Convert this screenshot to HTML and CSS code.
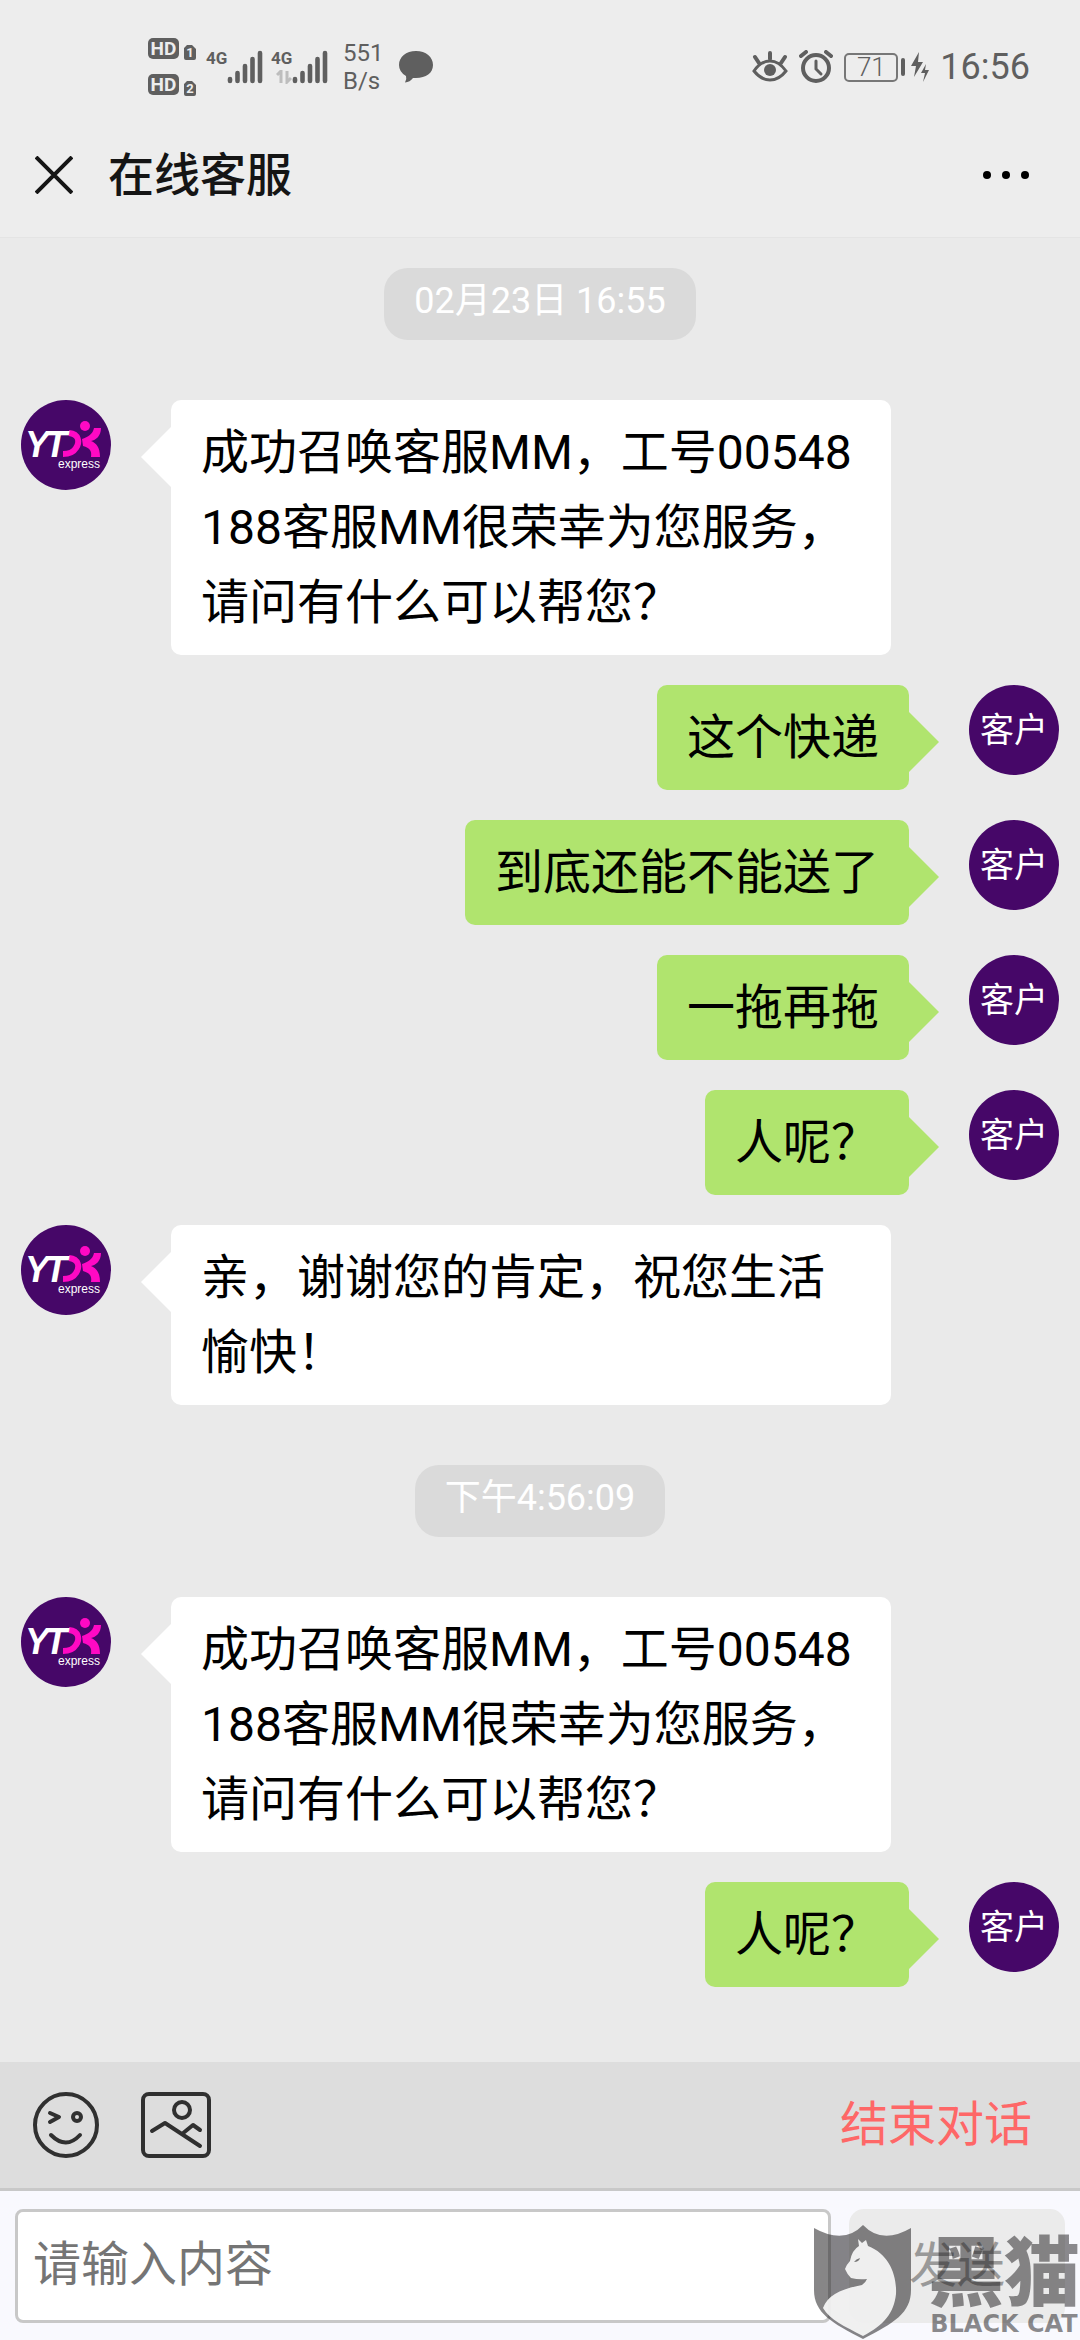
FILE: index.html
```html
<!DOCTYPE html>
<html lang="zh-CN">
<head>
<meta charset="utf-8">
<meta name="viewport" content="width=device-width, initial-scale=1">
<title>在线客服</title>
<link rel="stylesheet" href="styles.css">
</head>
<body>
<svg class="defs" width="0" height="0" aria-hidden="true">
  <symbol id="yto" viewBox="0 0 90 90">
    <circle cx="45" cy="45" r="45" fill="#460768"/>
    <path d="M48 33C58 34 59 42 55 48C52 53 48 54 42 54" fill="none" stroke="#ff09c4" stroke-width="6"/>
    <path d="M80 28C80 36 75 40 70 41C75 43 79 47 79 57L70 57C71 51 69 48 62 46L61 39C67 37 72 34 73 28Z" fill="#ff09c4"/>
    <circle cx="64" cy="26" r="5" fill="#ff09c4"/>
  </symbol>
  <symbol id="bars" viewBox="0 0 36 34">
    <path d="M3 29v2M10.500 23v8M18 16v15M25.500 9v22M33 3v28" fill="none" stroke="#5f5f5f" stroke-width="4.600" stroke-linecap="round"/>
  </symbol>
</svg>

<div class="status-bar">
  <div class="status-left">
    <svg width="50" height="58" viewBox="0 0 50 58" role="img" aria-label="HD 1, HD 2">
      <g fill="#5f5f5f">
        <rect x="0" y="0" width="31" height="21" rx="5"/>
        <rect x="0" y="36" width="31" height="21" rx="5"/>
        <path d="M39 7h5l4 4v9q0 2-2 2h-8q-2 0-2-2V10zM39 43h5l4 4v9q0 2-2 2h-8q-2 0-2-2V46z"/>
      </g>
      <g class="hd-text">
        <text x="15.500" y="17">HD</text>
        <text x="15.500" y="53">HD</text>
      </g>
      <g class="sim-text">
        <text x="42" y="19">1</text>
        <text x="42" y="55">2</text>
      </g>
    </svg>
    <div class="signal">
      <span class="network">4G</span>
      <svg width="36" height="34"><use href="#bars"/></svg>
    </div>
    <div class="signal">
      <div class="network-column">
        <span class="network">4G</span>
        <svg width="16" height="14" viewBox="0 0 16 14"><path d="M1 5l4-4v12M15 8l-4 4V1" fill="none" stroke="#bdbdbd" stroke-width="3"/></svg>
      </div>
      <svg width="36" height="34"><use href="#bars"/></svg>
    </div>
    <div class="speed">551<br>B/s</div>
    <svg width="34" height="32" viewBox="0 0 34 32"><path d="M17 0C27 0 34 6 34 14S27 27 17 27L14 27Q11 31 6 31.500Q8 28 7 25Q0 21 0 14C0 6 7 0 17 0Z" fill="#5f5f5f"/></svg>
  </div>
  <div class="status-right">
    <svg width="36" height="32" viewBox="0 0 36 32" fill="none" stroke="#5f5f5f" stroke-width="4" stroke-linecap="round">
      <path d="M2 20Q9 10 18 10T34 20Q27 29 18 29T2 20Z" stroke-width="3"/>
      <circle cx="18" cy="19" r="6" fill="#5f5f5f" stroke="none"/>
      <path d="M18 2v6M3 6l4 6M33 6l-4 6"/>
    </svg>
    <svg width="34" height="34" viewBox="0 0 34 34" fill="none" stroke="#5f5f5f" stroke-width="4" stroke-linecap="round">
      <circle cx="17" cy="18" r="13"/>
      <path d="M2 6l5-4M32 6l-5-4" />
      <path d="M17 11v8l5 5" stroke-width="3"/>
    </svg>
    <div class="battery"><span class="battery-level">71</span><span class="battery-tip"></span>
      <svg width="18" height="30" viewBox="0 0 18 30"><path d="M8 0L0 14h5l-2 11L12 10H7zM15 12l-5 9h4l-2 9l6-12h-4z" fill="#5f5f5f"/></svg>
    </div>
    <time class="clock">16:56</time>
  </div>
</div>

<header class="title-bar">
  <button class="icon-button" aria-label="关闭"><svg width="38" height="38" viewBox="0 0 38 38"><path d="M1 1L37 37M37 1L1 37" stroke="#151515" stroke-width="4"/></svg></button>
  <h1 class="title">在线客服</h1>
  <button class="icon-button" aria-label="更多"><svg width="48" height="10" viewBox="0 0 48 10"><circle cx="5" cy="5" r="4"/><circle cx="24" cy="5" r="4"/><circle cx="43" cy="5" r="4"/></svg></button>
</header>

<main class="chat">
  <time class="stamp">02月23日 16:55</time>
  <div class="message">
    <svg class="avatar" role="img" aria-label="YTO express"><use href="#yto"/><text class="logo-main" y="57"><tspan x="4">Y</tspan><tspan x="24">T</tspan></text><text class="logo-sub" x="37" y="68">express</text></svg>
    <p class="bubble">成功召唤客服MM，工号00548188客服MM很荣幸为您服务，请问有什么可以帮您？</p>
  </div>
  <div class="message mine"><p class="bubble">这个快递</p><span class="avatar customer">客户</span></div>
  <div class="message mine"><p class="bubble">到底还能不能送了</p><span class="avatar customer">客户</span></div>
  <div class="message mine"><p class="bubble">一拖再拖</p><span class="avatar customer">客户</span></div>
  <div class="message mine"><p class="bubble">人呢？</p><span class="avatar customer">客户</span></div>
  <div class="message">
    <svg class="avatar" role="img" aria-label="YTO express"><use href="#yto"/><text class="logo-main" y="57"><tspan x="4">Y</tspan><tspan x="24">T</tspan></text><text class="logo-sub" x="37" y="68">express</text></svg>
    <p class="bubble">亲，谢谢您的肯定，祝您生活愉快！</p>
  </div>
  <time class="stamp">下午4:56:09</time>
  <div class="message">
    <svg class="avatar" role="img" aria-label="YTO express"><use href="#yto"/><text class="logo-main" y="57"><tspan x="4">Y</tspan><tspan x="24">T</tspan></text><text class="logo-sub" x="37" y="68">express</text></svg>
    <p class="bubble">成功召唤客服MM，工号00548188客服MM很荣幸为您服务，请问有什么可以帮您？</p>
  </div>
  <div class="message mine"><p class="bubble">人呢？</p><span class="avatar customer">客户</span></div>
</main>

<footer>
  <div class="toolbar">
    <button class="icon-button" aria-label="表情">
      <svg width="66" height="66" viewBox="0 0 66 66" fill="none" stroke="#303030" stroke-width="4" stroke-linecap="round" stroke-linejoin="round">
        <circle cx="33" cy="33" r="31"/>
        <path d="M17 21l9 4l-9 5M18 43q15 15 29 0"/>
        <circle cx="44" cy="25" r="4"/>
      </svg>
    </button>
    <button class="icon-button" aria-label="图片">
      <svg width="70" height="66" viewBox="0 0 70 66" fill="none" stroke="#303030" stroke-width="4" stroke-linecap="round" stroke-linejoin="round">
        <rect x="2" y="2" width="66" height="62" rx="6"/>
        <circle cx="41" cy="18" r="8"/>
        <path d="M11 39l13-8l35 23M41 42l11-9l7 5"/>
      </svg>
    </button>
    <button class="end-chat">结束对话</button>
  </div>
  <form class="composer">
    <input class="message-input" type="text" placeholder="请输入内容" aria-label="请输入内容">
    <button class="send" type="button">发送</button>
    <div class="watermark">
      <svg width="98" height="115" viewBox="0 0 98 115">
        <path d="M0 3Q30 20 49 0Q68 20 97 3V65C97 88 80 98 49 114C18 98 0 88 0 65Z" fill="#1c1a1c" fill-opacity=".53"/>
        <path d="M44 14L48 18L52 15L54 21C75 29 83 50 82 69C80 88 70 100 49 111C30 101 16 95 9 83C14 70 27 64 48 60Q52 57 53 54Q45 55 37 53Q33 49 31 44Q33 39 36 36Q38 25 45 21Z" fill="#fff" fill-opacity=".88"/>
        <path d="M40 37q2-3 6-4q-1 4-6 4" fill="#777"/>
      </svg>
      <div class="watermark-text">
        <span class="watermark-name">黑猫</span>
        <span class="watermark-latin">BLACK CAT</span>
      </div>
    </div>
  </form>
</footer>
</body>
</html>
```

FILE: styles.css
```css
* {
  box-sizing: border-box;
}

body {
  margin: 0;
  min-height: 100vh;
  display: flex;
  flex-direction: column;
  background: #eaeaea;
  color: #000;
  font-family: Roboto, "Noto Sans CJK SC", sans-serif;
  font-size: 48px;
}

svg {
  display: block;
  flex: none;
}

button {
  border: 0;
  padding: 0;
  background: none;
  color: inherit;
  font: inherit;
}

.defs {
  position: absolute;
}

/* Status bar */
.status-bar {
  display: flex;
  align-items: center;
  justify-content: space-between;
  height: 134px;
  padding: 0 50px 0 148px;
  background: #ededed;
  color: #5f5f5f;
}

.status-left {
  display: flex;
  align-items: center;
  gap: 10px;
}

.status-right {
  display: flex;
  align-items: center;
  gap: 11px;
}

.hd-text,
.sim-text,
.network {
  font-family: "Liberation Sans Narrow", Roboto, sans-serif;
  font-weight: 700;
}

.hd-text {
  fill: #ededed;
  font-size: 19px;
  text-anchor: middle;
}

.sim-text {
  fill: #ededed;
  font-size: 13px;
  text-anchor: middle;
}

.signal {
  display: flex;
  width: 55px;
  justify-content: flex-end;
}

.network-column {
  display: flex;
  flex-direction: column;
  align-items: flex-end;
  gap: 4px;
}

.network {
  width: 21px;
  font-size: 17px;
  line-height: 16px;
}

.speed {
  margin: 0 6px 0 5px;
  font-size: 24px;
  line-height: 28px;
}

.battery {
  display: flex;
  align-items: center;
  gap: 3px;
}

.battery-level {
  width: 54px;
  border: 2px solid #777;
  border-radius: 5px;
  font-size: 26px;
  font-weight: 300;
  line-height: 25px;
  text-align: center;
}

.battery-tip {
  width: 4px;
  height: 18px;
  border-radius: 2px;
  background: #5f5f5f;
}

.battery svg {
  margin-left: 3px;
}

.clock {
  font-size: 36px;
  line-height: 36px;
}

/* Title bar */
.title-bar {
  display: flex;
  align-items: center;
  gap: 35px;
  height: 104px;
  padding: 0 50px 22px 35px;
  border-bottom: 1px solid #e4e4e4;
  background: #ededed;
}

.title {
  flex: 1;
  margin: 0;
  color: #151515;
  font-size: 46px;
  font-weight: 500;
  line-height: 60px;
}

/* Conversation */
.chat {
  flex: 1;
  display: flex;
  flex-direction: column;
  gap: 30px;
  padding: 30px 21px 75px;
}

.stamp {
  align-self: center;
  height: 72px;
  margin: 30px 0;
  padding: 0 30px;
  border-radius: 24px;
  background: #dadada;
  color: #fff;
  font-size: 36px;
  line-height: 66px;
}

.stamp:first-child {
  margin-top: 0;
}

.message {
  display: flex;
  align-items: flex-start;
  gap: 60px;
}

.mine {
  justify-content: flex-end;
}

.avatar {
  flex: none;
  width: 90px;
  height: 90px;
}

.customer {
  border-radius: 50%;
  background: #460768;
  color: #fff;
  font-size: 34px;
  line-height: 90px;
  text-align: center;
}

.logo-main {
  fill: #fff;
  font: italic 700 36px "Liberation Sans", sans-serif;
}

.logo-sub {
  fill: #fff;
  font: 12px "Liberation Sans", sans-serif;
}

.bubble {
  position: relative;
  max-width: 720px;
  margin: 0;
  padding: 15px 30px;
  border-radius: 10px;
  background: #fff;
  line-height: 75px;
  word-break: break-all;
}

.bubble::before {
  content: "";
  position: absolute;
  top: 27px;
  right: 100%;
  border: 30px solid transparent;
  border-left-width: 0;
  border-right-color: #fff;
}

.mine .bubble {
  background: #b0e46e;
}

.mine .bubble::before {
  right: auto;
  left: 100%;
  border-width: 30px 0 30px 30px;
  border-color: transparent transparent transparent #b0e46e;
}

/* Footer */
.toolbar {
  display: flex;
  align-items: center;
  gap: 42px;
  height: 129px;
  padding: 0 48px 0 33px;
  border-bottom: 3px solid #c8c8c8;
  background: #ddd;
}

.end-chat {
  margin-left: auto;
  color: #fe6767;
  line-height: 72px;
}

.composer {
  position: relative;
  display: flex;
  gap: 18px;
  padding: 18px 15px 17px;
  background: #f9f9fe;
}

.message-input {
  flex: 1;
  min-width: 0;
  height: 114px;
  padding: 0 15px 4px;
  border: 3px solid #c8c8c8;
  border-radius: 8px;
  background: #fff;
  color: #000;
  font: inherit;
}

.message-input::placeholder {
  color: #757575;
}

.send {
  width: 216px;
  padding-bottom: 10px;
  border-radius: 15px;
  background: #ebebeb;
  color: #999;
}

.watermark {
  position: absolute;
  right: 0;
  bottom: 0;
  display: flex;
  align-items: flex-end;
  gap: 16px;
  pointer-events: none;
}

.watermark-text {
  display: flex;
  flex-direction: column;
  align-items: center;
  padding-bottom: 4px;
  color: rgba(28, 26, 28, 0.5);
}

.watermark-name {
  font-size: 76px;
  font-weight: 900;
  line-height: 76px;
}

.watermark-latin {
  font-family: "DejaVu Sans", sans-serif;
  font-size: 24px;
  font-weight: 700;
  line-height: 24px;
}
```
